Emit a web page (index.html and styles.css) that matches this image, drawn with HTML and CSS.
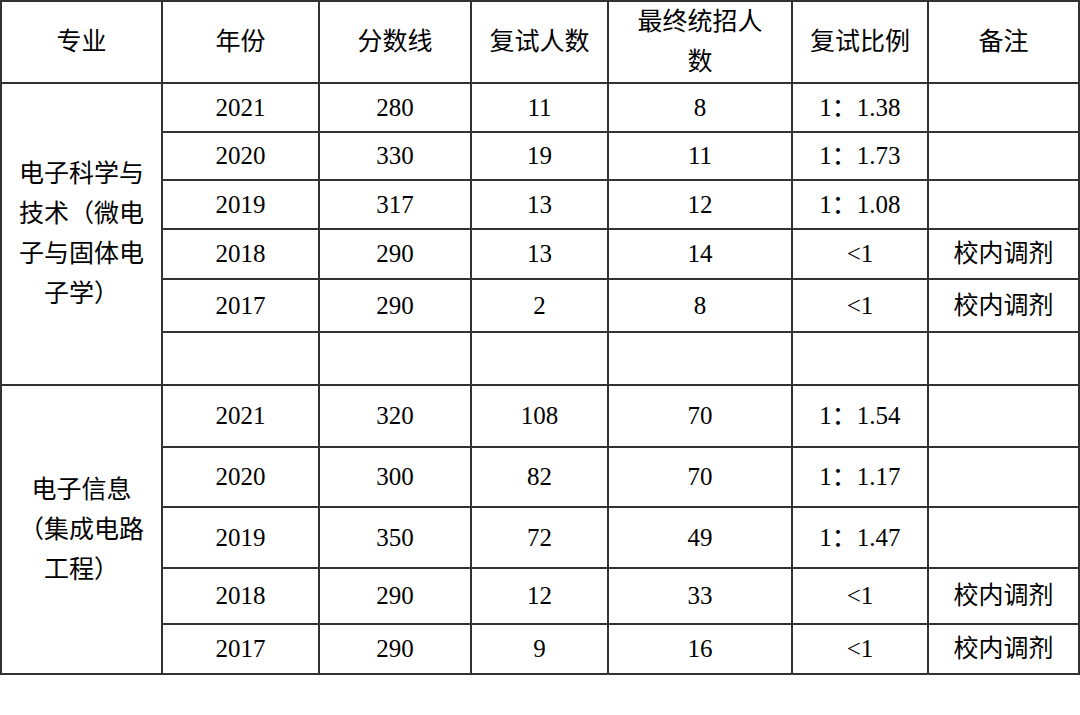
FILE: index.html
```html
<!DOCTYPE html>
<html lang="zh-CN">
<head>
<meta charset="utf-8">
<title>复试数据</title>
<link rel="stylesheet" href="styles.css">
</head>
<body>
<table class="grid">
  <colgroup>
    <col class="c1"><col class="c2"><col class="c3"><col class="c4"><col class="c5"><col class="c6"><col class="c7">
  </colgroup>
  <thead>
    <tr class="h81">
      <th>专业</th><th>年份</th><th>分数线</th><th>复试人数</th><th>最终统招人<br>数</th><th>复试比例</th><th>备注</th>
    </tr>
  </thead>
  <tbody>
    <tr class="h49">
      <td rowspan="6" class="major">电子科学与<br>技术（微电<br>子与固体电<br>子学）</td>
      <td>2021</td><td>280</td><td>11</td><td>8</td><td>1：1.38</td><td></td>
    </tr>
    <tr class="h48"><td>2020</td><td>330</td><td>19</td><td>11</td><td>1：1.73</td><td></td></tr>
    <tr class="h49"><td>2019</td><td>317</td><td>13</td><td>12</td><td>1：1.08</td><td></td></tr>
    <tr class="h50"><td>2018</td><td>290</td><td>13</td><td>14</td><td>&lt;1</td><td>校内调剂</td></tr>
    <tr class="h53"><td>2017</td><td>290</td><td>2</td><td>8</td><td>&lt;1</td><td>校内调剂</td></tr>
    <tr class="h53"><td></td><td></td><td></td><td></td><td></td><td></td></tr>
    <tr class="h62">
      <td rowspan="5" class="major">电子信息<br>（集成电路<br>工程）</td>
      <td>2021</td><td>320</td><td>108</td><td>70</td><td>1：1.54</td><td></td>
    </tr>
    <tr class="h60"><td>2020</td><td>300</td><td>82</td><td>70</td><td>1：1.17</td><td></td></tr>
    <tr class="h61"><td>2019</td><td>350</td><td>72</td><td>49</td><td>1：1.47</td><td></td></tr>
    <tr class="h56"><td>2018</td><td>290</td><td>12</td><td>33</td><td>&lt;1</td><td>校内调剂</td></tr>
    <tr class="h50"><td>2017</td><td>290</td><td>9</td><td>16</td><td>&lt;1</td><td>校内调剂</td></tr>
  </tbody>
</table>
</body>
</html>
```
FILE: styles.css
```css
html, body {
  margin: 0;
  padding: 0;
  background: #ffffff;
}
body {
  font-family: "Liberation Serif", "Noto Sans CJK SC", serif;
  font-size: 25px;
  color: #000000;
}
.grid {
  border-collapse: collapse;
  table-layout: fixed;
  width: 1078px;
}
.c1 { width: 161px; }
.c2 { width: 157px; }
.c3 { width: 152px; }
.c4 { width: 137px; }
.c5 { width: 184px; }
.c6 { width: 136px; }
.c7 { width: 151px; }
.grid th, .grid td {
  border: 2px solid #333333;
  padding: 0;
  text-align: center;
  vertical-align: middle;
  font-weight: normal;
  line-height: 1.2;
}
.grid th {
  line-height: 40px;
}
.grid td.major {
  line-height: 40px;
}
.h81 { height: 81px; }
.h48 { height: 48px; }
.h49 { height: 49px; }
.h50 { height: 50px; }
.h53 { height: 53px; }
.h56 { height: 56px; }
.h60 { height: 60px; }
.h61 { height: 61px; }
.h62 { height: 62px; }
```
